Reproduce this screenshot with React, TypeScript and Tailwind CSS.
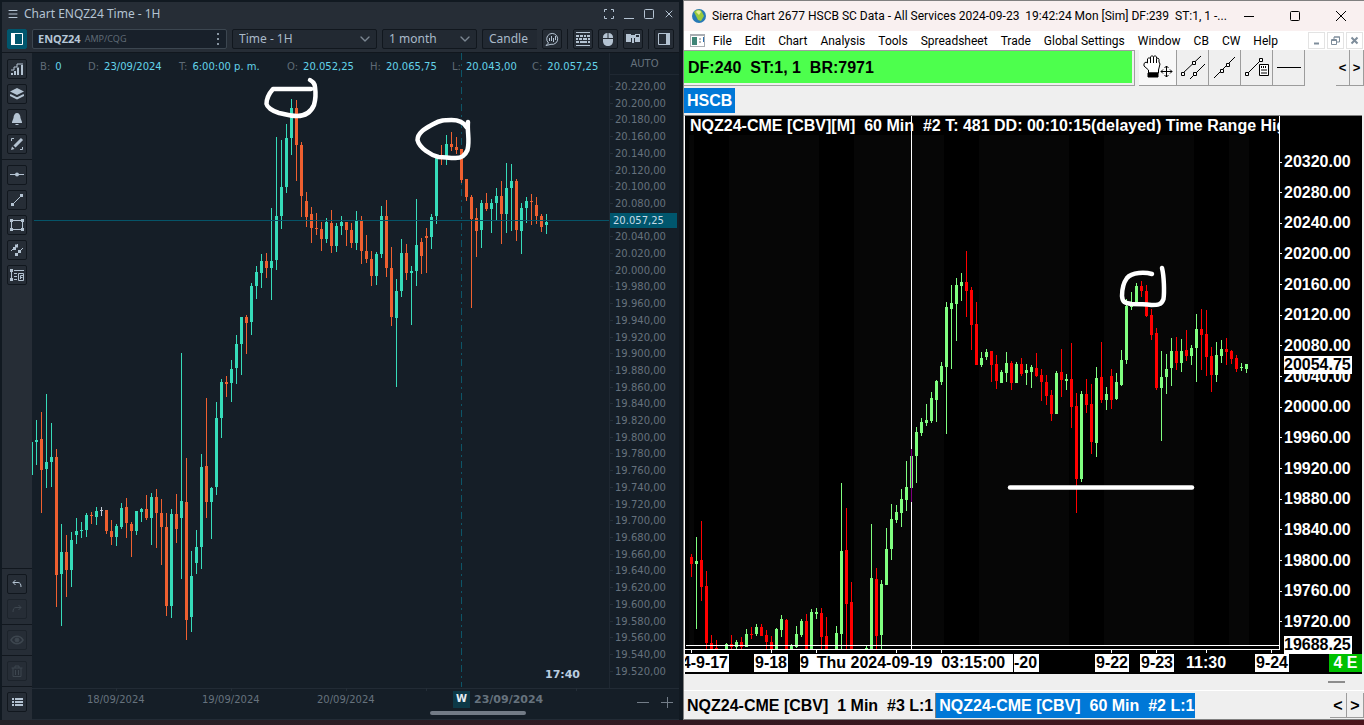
import type { ReactNode } from "react";
import { ChevronDown, Menu, X } from "lucide-react";

// [high, body top, body bottom, low, direction]; an empty row is a bar outside the view
type Bar = [number, number, number, number, string] | [];

const leftBars: Bar[] = [
  [442, 442, 475, 475, "u"], [420, 440, 442, 465, "u"], [412, 439, 470, 513, "d"], [394, 462, 469, 488, "u"],
  [423, 457, 462, 487, "u"], [449, 457, 575, 607, "d"], [524, 552, 574, 626, "u"], [535, 552, 570, 597, "d"],
  [532, 540, 570, 587, "u"], [518, 531, 535, 544, "u"], [522, 530, 531, 538, "u"], [513, 515, 530, 537, "u"],
  [512, 515, 516, 524, "d"], [507, 511, 517, 525, "u"], [507, 510, 511, 516, "n"], [510, 510, 531, 534, "d"],
  [520, 531, 537, 545, "d"], [524, 526, 537, 546, "u"], [503, 508, 527, 529, "u"], [498, 507, 523, 538, "d"],
  [522, 524, 531, 557, "d"], [511, 511, 531, 535, "u"], [508, 509, 512, 522, "u"], [495, 509, 518, 520, "d"],
  [493, 497, 518, 545, "u"], [489, 497, 513, 548, "d"], [499, 513, 527, 565, "d"], [513, 527, 606, 616, "d"],
  [509, 514, 606, 618, "u"], [494, 514, 529, 543, "d"], [353, 501, 518, 579, "u"], [458, 502, 620, 640, "d"],
  [551, 576, 617, 632, "u"], [530, 547, 563, 574, "u"], [454, 467, 547, 569, "u"], [398, 466, 502, 518, "d"],
  [487, 488, 502, 539, "u"], [402, 418, 487, 495, "u"], [379, 382, 418, 438, "u"], [376, 382, 384, 397, "d"],
  [360, 369, 383, 402, "u"], [335, 344, 368, 384, "u"], [317, 317, 344, 375, "u"], [315, 317, 323, 354, "d"],
  [283, 286, 322, 335, "u"], [266, 272, 286, 299, "u"], [254, 261, 273, 288, "u"], [253, 261, 268, 278, "d"],
  [208, 261, 268, 300, "u"], [137, 216, 260, 270, "u"], [140, 187, 216, 229, "u"], [124, 138, 187, 193, "u"],
  [99, 108, 138, 155, "u"], [100, 108, 145, 181, "d"], [142, 145, 196, 217, "d"], [192, 201, 217, 227, "d"],
  [207, 214, 228, 243, "d"], [213, 228, 229, 235, "d"], [222, 229, 239, 251, "d"], [218, 222, 239, 243, "u"],
  [210, 223, 246, 253, "d"], [223, 226, 246, 252, "u"], [216, 222, 226, 235, "u"], [222, 222, 230, 246, "d"],
  [223, 230, 243, 248, "d"], [211, 220, 243, 250, "u"], [216, 220, 251, 264, "d"], [235, 251, 259, 263, "d"],
  [251, 259, 276, 286, "d"], [252, 254, 276, 285, "u"], [206, 216, 254, 258, "u"], [200, 216, 268, 277, "d"],
  [247, 268, 317, 326, "d"], [279, 291, 318, 387, "u"], [239, 253, 291, 297, "u"], [244, 253, 273, 280, "d"],
  [266, 271, 273, 325, "u"], [199, 245, 271, 286, "u"], [238, 242, 256, 274, "d"], [228, 236, 238, 273, "d"],
  [214, 217, 237, 249, "u"], [156, 158, 216, 224, "u"], [145, 156, 158, 165, "d"], [135, 144, 158, 165, "u"],
  [132, 144, 147, 151, "d"], [137, 147, 150, 154, "d"], [149, 149, 180, 183, "d"], [179, 179, 197, 201, "d"],
  [195, 197, 219, 308, "d"], [208, 218, 231, 257, "d"], [200, 203, 230, 248, "u"], [193, 203, 209, 211, "d"],
  [199, 203, 209, 233, "u"], [188, 196, 203, 220, "u"], [181, 196, 214, 244, "d"], [163, 188, 214, 233, "u"],
  [164, 181, 188, 231, "u"], [179, 181, 230, 241, "d"], [203, 208, 231, 254, "u"], [197, 201, 208, 223, "u"],
  [194, 201, 202, 225, "d"], [197, 205, 216, 224, "d"], [214, 216, 227, 232, "d"], [214, 222, 225, 234, "u"],
];

const rightBars: Bar[] = [
  [554, 557, 564, 577, "d"], [537, 561, 564, 629, "u"], [521, 560, 587, 601, "d"], [571, 586, 643, 649, "d"],
  [635, 643, 649, 649, "d"], [640, 648, 649, 649, "d"], [], [643, 644, 649, 649, "u"],
  [635, 644, 647, 649, "d"], [640, 642, 647, 649, "u"], [637, 642, 647, 649, "d"], [629, 634, 647, 647, "u"],
  [627, 634, 635, 639, "d"], [624, 627, 634, 636, "u"], [624, 627, 636, 636, "d"], [630, 635, 642, 649, "d"],
  [636, 642, 649, 649, "d"], [628, 629, 649, 649, "u"], [615, 619, 630, 637, "u"], [619, 620, 649, 649, "d"],
  [644, 646, 649, 649, "u"], [626, 634, 647, 648, "u"], [619, 621, 635, 637, "u"], [614, 621, 649, 649, "d"],
  [609, 612, 649, 649, "u"], [608, 612, 614, 619, "u"], [608, 613, 637, 649, "d"], [617, 636, 649, 649, "d"],
  [], [626, 633, 649, 649, "u"], [483, 551, 634, 649, "u"], [508, 550, 604, 649, "d"],
  [582, 602, 649, 649, "d"], [], [], [646, 648, 649, 649, "u"],
  [524, 578, 649, 649, "u"], [568, 579, 636, 649, "d"], [580, 584, 635, 649, "u"], [528, 549, 585, 585, "u"],
  [504, 519, 549, 560, "u"], [505, 512, 520, 523, "u"], [489, 499, 513, 527, "u"], [461, 487, 500, 511, "u"],
  [449, 456, 488, 502, "u"], [427, 432, 456, 483, "u"], [418, 422, 433, 436, "u"], [404, 420, 423, 426, "u"],
  [392, 398, 421, 423, "u"], [380, 381, 400, 422, "u"], [362, 366, 382, 385, "u"], [302, 307, 367, 434, "u"],
  [285, 303, 309, 369, "u"], [278, 285, 304, 341, "u"], [273, 282, 286, 301, "u"], [251, 282, 291, 317, "d"],
  [287, 290, 325, 350, "d"], [302, 324, 365, 365, "d"], [352, 358, 365, 367, "u"], [349, 352, 357, 360, "u"],
  [351, 351, 365, 382, "d"], [355, 364, 381, 389, "d"], [370, 372, 383, 383, "u"], [352, 363, 373, 382, "u"],
  [361, 363, 383, 390, "d"], [362, 364, 383, 383, "u"], [358, 364, 374, 376, "d"], [364, 370, 373, 385, "u"],
  [365, 367, 372, 388, "u"], [353, 368, 376, 377, "d"], [369, 375, 382, 401, "d"], [375, 382, 396, 405, "d"],
  [390, 395, 414, 421, "d"], [371, 373, 414, 414, "u"], [349, 372, 380, 397, "d"], [374, 379, 381, 390, "u"],
  [343, 379, 407, 428, "d"], [393, 406, 479, 513, "d"], [391, 394, 479, 482, "u"], [379, 394, 405, 413, "d"],
  [384, 404, 442, 454, "d"], [367, 378, 443, 457, "u"], [342, 377, 400, 403, "d"], [387, 394, 400, 410, "u"],
  [369, 376, 400, 409, "d"], [373, 382, 399, 400, "u"], [350, 360, 385, 386, "u"], [299, 306, 360, 364, "u"],
  [292, 305, 307, 310, "u"], [283, 286, 304, 304, "u"], [281, 286, 291, 297, "d"], [285, 291, 316, 317, "d"],
  [309, 315, 335, 340, "d"], [328, 333, 388, 390, "d"], [351, 377, 388, 441, "u"], [354, 369, 377, 394, "u"],
  [338, 351, 368, 386, "u"], [337, 351, 363, 370, "d"], [339, 351, 363, 372, "u"], [330, 350, 356, 361, "d"],
  [345, 348, 356, 365, "u"], [314, 329, 348, 382, "u"], [309, 329, 335, 370, "d"], [310, 334, 357, 376, "d"],
  [347, 356, 375, 392, "d"], [342, 355, 375, 382, "u"], [340, 349, 356, 363, "u"], [338, 349, 352, 365, "d"],
  [350, 351, 359, 364, "d"], [355, 358, 369, 372, "d"], [363, 367, 368, 371, "u"], [364, 364, 369, 373, "u"],
];

const sessionBands = [
  [689, 5], [729, 90], [854, 90], [979, 90], [1104, 90], [1229, 20],
];

const leftPrices = Array.from({ length: 36 }, (_, i) => 20220 - i * 20);
const rightPrices = Array.from({ length: 16 }, (_, i) => 20320 - i * 40);

const formatPrice = (n: number) => `${Math.floor(n / 1000)}.${String(n % 1000).padStart(3, "0")},00`;

const quote = [
  { label: "B", value: "0", width: "w-12" },
  { label: "D", value: "23/09/2024", width: "w-[91px]" },
  { label: "T", value: "6:00:00 p. m.", width: "w-[108px]" },
  { label: "O", value: "20.052,25", width: "w-[83px]" },
  { label: "H", value: "20.065,75", width: "w-[82px]" },
  { label: "L", value: "20.043,00", width: "w-20" },
  { label: "C", value: "20.057,25", width: "w-[77px]" },
];

const menus = ["File", "Edit", "Chart", "Analysis", "Tools", "Spreadsheet", "Trade", "Global Settings", "Window", "CB", "CW", "Help"];

const Candles = ({ bars, start, colors }: { bars: Bar[]; start: number; colors: Record<string, string> }) => (
  <g shapeRendering="crispEdges">
    {bars.map((bar, i) => {
      if (bar.length === 0) return null;
      const [high, top, bottom, low, dir] = bar;
      const x = start + i * 5;
      return (
        <g key={i} fill={colors[dir]}>
          <rect x={x} y={high} width={1} height={low - high} />
          <rect x={x - 1} y={top} width={3} height={Math.max(1, bottom - top)} />
        </g>
      );
    })}
  </g>
);

const ToolButton = ({ label, children, active, dim }: { label: string; children: ReactNode; active?: boolean; dim?: boolean }) => (
  <button
    aria-label={label}
    className={`flex h-5 w-5 shrink-0 items-center justify-center rounded-[2px] border ${
      active ? "border-[#00566d] bg-[#00566d] text-white" : dim ? "border-[#1c232b] text-[#3d464f]" : "border-[#11171e] text-[#b4c3d2]"
    }`}
  >
    <svg viewBox="0 0 14 14" className="h-3.5 w-3.5" fill="none" stroke="currentColor" strokeWidth={1}>
      {children}
    </svg>
  </button>
);

const Divider = () => <div className="my-[5px] h-px w-full bg-[#11171e]" />;

const Sidebar = () => (
  <aside className="relative z-10 flex w-[30px] shrink-0 flex-col items-center bg-[#262d36] pt-1.5 pb-2">
    <div className="flex flex-col gap-[5px]">
      <ToolButton label="Indicators">
        <path d="M2 13v-2M5 13V9M8 13V5.500M12 13V3" strokeWidth={2} />
        <path d="M1 8h3V5h3V2h6" />
      </ToolButton>
      <ToolButton label="Layers">
        <path d="M7 1l7 3.500-7 3.500-7-3.500z" fill="currentColor" stroke="none" />
        <path d="M0 8l7 3.500L14 8" strokeWidth={2} />
      </ToolButton>
      <ToolButton label="Alerts">
        <path d="M7 1c-2 0-3.500 2-3.500 5L2 10v1h10v-1l-1.500-4C10.500 3 9 1 7 1zM5.500 12h3v1h-3z" fill="currentColor" stroke="none" />
      </ToolButton>
      <ToolButton label="Draw">
        <path d="M1.500 4V1.500H4M10 12.500h2.500V10" />
        <path d="M4.500 9.500L12 2" strokeWidth={3} />
        <path d="M1 13l1-3.500 2.500 2.500z" fill="currentColor" stroke="none" />
      </ToolButton>
    </div>
    <Divider />
    <div className="flex flex-col gap-[5px]">
      <ToolButton label="Horizontal line">
        <path d="M0 6.500h14" />
        <circle cx="7" cy="6.500" r="2" fill="currentColor" stroke="none" />
      </ToolButton>
      <ToolButton label="Trend line">
        <path d="M2.500 11.500l9-9" />
        <path d="M1 10h3v3H1zM10 1h3v3h-3z" fill="currentColor" stroke="none" />
      </ToolButton>
      <ToolButton label="Rectangle">
        <path d="M1.500 2.500h11v9h-11z" />
        <path d="M0 1h3v3H0zM11 1h3v3h-3zM0 10h3v3H0zM11 10h3v3h-3z" fill="currentColor" stroke="none" />
      </ToolButton>
      <ToolButton label="Channel">
        <path d="M1 8l7-7M5 13l8-8" />
        <path d="M3 4h3v3H3zM8 7h3v3H8zM5 10h3v3H5zM5 1.500h3v3H5z" fill="currentColor" stroke="none" />
      </ToolButton>
      <ToolButton label="Fibonacci">
        <path d="M1.500 2v10M4 2.500h10M4 5.500h3M4 8.500h3M4 11.500h3" />
        <path d="M0 1h3v3H0zM0 10h3v3H0z" fill="currentColor" stroke="none" />
        <path d="M8.500 5.500h5v7h-5zM10.500 11V7.500H13M10.500 9.500h2" />
      </ToolButton>
    </div>
    <div className="flex-1" />
    <Divider />
    <div className="flex flex-col gap-[5px]">
      <ToolButton label="Undo">
        <path d="M5.500 3L3 5.500 5.500 8M3 5.500h5c2 0 3 1.500 3 4.500" />
      </ToolButton>
      <ToolButton label="Redo" dim>
        <path d="M8.500 3L11 5.500 8.500 8M11 5.500H6c-2 0-3 1.500-3 4.500" />
      </ToolButton>
    </div>
    <Divider />
    <ToolButton label="Show drawings" dim>
      <path d="M1 7c3-5 9-5 12 0-3 5-9 5-12 0z" strokeWidth={1.5} />
      <circle cx="7" cy="7" r="2" fill="currentColor" />
    </ToolButton>
    <Divider />
    <ToolButton label="Delete drawings" dim>
      <path d="M1.500 4h11M3 4v8.500h8V4M5 4V2h4v2M5.500 6v5M8.500 6v5" />
    </ToolButton>
    <Divider />
    <ToolButton label="List">
      <path d="M2 4h2M5 4h8M2 7h2M5 7h8M2 10h2M5 10h8" strokeWidth={2} />
    </ToolButton>
  </aside>
);

const Dropdown = ({ label, value, className }: { label: string; value: string; className: string }) => (
  <div className={`relative h-5 shrink-0 ${className}`}>
    <select
      aria-label={label}
      className="block h-5 w-full appearance-none rounded-[2px] border border-[#11171e] bg-[#222932] pl-1.5 text-xs leading-4 text-[#a9b9c9] outline-none"
    >
      <option>{value}</option>
    </select>
    <ChevronDown className="pointer-events-none absolute top-0.5 right-1 h-4 w-4 text-[#7b8792]" strokeWidth={2} />
  </div>
);

const LeftToolbar = () => (
  <div className="flex h-7 items-center gap-[5px] border-b border-[#11171e] px-[5px]">
    <ToolButton label="Panel" active>
      <path d="M1.500 1.500h11v11h-11z" />
      <path d="M1 1h4v12H1z" fill="currentColor" stroke="none" />
    </ToolButton>
    <div className="flex h-5 min-w-0 flex-1 items-center rounded-[2px] border border-[#3c4650] bg-[#18202a] px-[5px]">
      <b className="text-[11px] leading-4 text-[#b6c6d6]">ENQZ24</b>
      <span className="ml-1 flex-1 text-[9px] leading-4 text-[#5f6a75]">AMP/CQG</span>
      <svg viewBox="0 0 2 12" className="mr-0.5 h-3 w-0.5 text-[#8794a1]" fill="currentColor">
        <path d="M0 0h2v2H0zM0 5h2v2H0zM0 10h2v2H0z" />
      </svg>
    </div>
    <Dropdown label="Interval" value="Time - 1H" className="w-[145px]" />
    <Dropdown label="Range" value="1 month" className="w-[95px]" />
    <button className="h-5 w-[55px] shrink-0 rounded-l-[2px] border border-r-0 border-[#11171e] bg-[#222932] pl-1.5 text-left text-xs leading-4 text-[#a9b9c9]">
      Candle
    </button>
    <ToolButton label="Chart analysis">
      <path d="M3.500 11A5.500 5.500 0 1 1 6 12.300L1 13.500z" />
      <path d="M4.500 6v3M6.500 4v5M8.500 6v4M10.500 4v4" />
    </ToolButton>
    <div className="h-5 w-px bg-[#11171e]" />
    <ToolButton label="Keyboard">
      <path d="M0 .5h14M0 13.500h14" />
      <path d="M0 3h3v2H0zM4 3h3v2H4zM8 3h2v2H8zM11 3h3v2h-3zM0 6h2v2H0zM3 6h3v2H3zM7 6h4v2H7zM12 6h2v2h-2zM0 9h3v2H0zM4 9h7v2H4zM12 9h2v2h-2z" fill="currentColor" stroke="none" />
    </ToolButton>
    <ToolButton label="Mouse">
      <path d="M2 6V5c0-2 2-4 4.500-4v5zM7.500 1C10 1 12 3 12 5v1H7.500zM2 7h10v2c0 3-2 5-5 5s-5-2-5-5z" fill="currentColor" stroke="none" />
    </ToolButton>
    <ToolButton label="Link charts">
      <path d="M0 2h5v1h4V2h5v8H9V6H8v5H6V6H5v4H0zM10 3h3v2h-3z" fill="currentColor" fillRule="evenodd" stroke="none" />
    </ToolButton>
    <div className="h-5 w-px bg-[#11171e]" />
    <ToolButton label="Right panel">
      <path d="M1.500 1.500h11v11h-11z" />
      <path d="M9 1h4v12H9z" fill="currentColor" stroke="none" />
    </ToolButton>
  </div>
);

const LeftWindow = () => (
  <section className="mt-0.5 mr-1 ml-0.5 flex min-w-0 flex-col bg-[#151e27] font-['Noto_Sans',sans-serif]">
    <div className="bg-[#262d36]">
      <header className="flex h-[23px] items-center gap-[5px] pr-1 pl-[5px] text-[#b4c3d2]">
        <Menu className="h-3 w-3" strokeWidth={2} />
        <h1 className="flex-1 text-xs leading-4">Chart ENQZ24 Time - 1H</h1>
        <div className="flex items-center gap-2">
          <button aria-label="Full screen">
            <svg viewBox="0 0 12 12" className="h-3 w-3" fill="none" stroke="currentColor">
              <path d="M1.500 4V1.500H4M8 1.500h2.500V4M10.500 8v2.500H8M4 10.500H1.500V8" />
            </svg>
          </button>
          <button aria-label="Minimize">
            <svg viewBox="0 0 12 12" className="h-3 w-3" stroke="currentColor">
              <path d="M1 10.500h10" />
            </svg>
          </button>
          <button aria-label="Maximize">
            <svg viewBox="0 0 12 12" className="h-3 w-3" fill="none" stroke="currentColor">
              <rect x="1.500" y="1.500" width="9" height="9" rx="1" />
            </svg>
          </button>
          <button aria-label="Close">
            <X className="h-3 w-3" strokeWidth={2} />
          </button>
        </div>
      </header>
      <LeftToolbar />
    </div>
    <div className="flex min-h-0 flex-1">
      <Sidebar />
      <div className="flex min-w-0 flex-1 flex-col">
        <div className="flex min-h-0 flex-1">
          <div className="flex min-w-0 flex-1 flex-col">
            <div className="relative z-10 flex h-[23px] items-center overflow-hidden pt-1 pl-2 font-['DejaVu_Sans',sans-serif] text-[10px] leading-4 whitespace-nowrap">
              {quote.map((q) => (
                <div key={q.label} className={`shrink-0 ${q.width}`}>
                  <span className="mr-[5px] text-[#5f6b76]">{q.label}:</span>
                  <span className="text-[#63d3e9]">{q.value}</span>
                </div>
              ))}
            </div>
            <div className="relative min-h-0 flex-1">
              <svg viewBox="32 76 577 612" preserveAspectRatio="none" className="absolute inset-0 h-full w-full overflow-visible" fill="none">
                <path d="M461.500 53v634" stroke="#0d5567" strokeDasharray="7 4 2 4" />
                <Candles bars={leftBars} start={31} colors={{ u: "#36dcba", d: "#ef6030", n: "#c3ccd6" }} />
                <path d="M34 220.500h575" stroke="#055468" />
                <path d="M116.500 688v3M231.500 688v3M346.500 688v3M426.500 688v3M576.500 688v3" stroke="#242e38" />
                <g stroke="#fff" strokeWidth={4.5} strokeLinecap="round" strokeLinejoin="round">
                  <path d="M310 80c3 2 4.500 3 5 7 1 7 .5 13-1 18-3 7-8 11-17 11-7 0-12-2-18-3-7-2-12-6-12.500-9 0-5 3-11 6.500-15h38" />
                  <path d="M468 122c-1 10 2 18-.5 28-3 7-7 8-12 8-7 0-11-1-17-1-8-2-19-9-21-17 0-8 9-12 16-16 7-4 11-4 18-4 7 0 12 2 15 7" />
                </g>
              </svg>
              <time className="absolute right-[29px] bottom-[5px] font-['DejaVu_Sans',sans-serif] text-[11px] leading-4 font-bold text-[#b9cde0]">17:40</time>
            </div>
          </div>
          <div className="flex w-[70px] shrink-0 flex-col border-l border-[#1f2832] font-['DejaVu_Sans',sans-serif] text-[10px] leading-[15px] text-[#66727d]">
            <button className="h-[22px] border-b border-[#1f2832]">AUTO</button>
            <ul className="flex flex-1 flex-col justify-between pt-[4px] pb-[9px]">
              {leftPrices.map((p) =>
                p === 20060 ? (
                  <li key={p} className="mr-[2px] bg-[#00566d] pl-[3px] text-[#c6dbe8]">20.057,25</li>
                ) : (
                  <li key={p} className="flex items-center gap-[2px]">
                    <i className="h-px w-[3px] bg-[#242e38]" />
                    {formatPrice(p)}
                  </li>
                ),
              )}
            </ul>
          </div>
        </div>
        <footer className="flex h-8 shrink-0 flex-col border-t border-b border-[#222b35] font-['DejaVu_Sans',sans-serif] text-[10px] leading-4 text-[#66727d]">
          <div className="flex h-[21px] items-center pl-[55px]">
            <span className="w-[115px]">18/09/2024</span>
            <span className="w-[115px]">19/09/2024</span>
            <span className="w-[136px]">20/09/2024</span>
            <b className="h-[17px] w-[17px] bg-[#0c3947] text-center text-[#e7eef4]">W</b>
            <b className="ml-1 text-[11px]">23/09/2024</b>
            <div className="flex-1" />
            <svg viewBox="0 0 36 12" className="mt-1 mr-1.5 h-3 w-9" stroke="#737d88" fill="none">
              <path d="M0 6.500h12M24 6.500h12M30.500 1v11" />
            </svg>
          </div>
          <div className="mt-px ml-[398px] h-[4px] w-24 shrink-0 rounded-full bg-[#737b86]" />
        </footer>
      </div>
    </div>
  </section>
);

const SquareButton = ({ label, children }: { label: string; children: ReactNode }) => (
  <button aria-label={label} className="flex h-[17px] w-[17px] items-center justify-center border border-[#e3e3e3] bg-white">
    <svg viewBox="0 0 9 9" className="h-[9px] w-[9px]" fill="none" stroke="#7e8d9b">{children}</svg>
  </button>
);

const DrawButton = ({ label, children, pressed }: { label: string; children: ReactNode; pressed?: boolean }) => (
  <button
    aria-label={label}
    className={`flex h-9 items-center justify-center border-r border-b border-[#9c9c9c] ${pressed ? "w-[38px] bg-[#f8f8f8]" : "w-8 bg-[#efefef]"}`}
  >
    {children}
  </button>
);

const RightToolbar = () => (
  <div className="flex h-[37px] shrink-0 items-start bg-[#efefef] text-base leading-[18px] font-bold">
    <div className="flex h-9 min-w-0 flex-1 items-center border-t border-r border-b border-[#a0a0a0] pr-0.5 pb-0.5">
      <div className="flex h-full flex-1 items-center bg-[#4dff4d] pt-0.5 pl-1 whitespace-pre text-black">DF:240  ST:1, 1  BR:7971</div>
    </div>
    <div className="ml-1 flex">
      <DrawButton label="Hand" pressed>
        <svg viewBox="0 0 30 26" className="h-[26px] w-[30px]" fill="#fff" stroke="#000">
          <path d="M5.500 18v-3L1 11V8.500l2-1.500 1.500 1V4L6 2.500 7.500 4V2L9 .5 10.500 2 12 .5 13.500 2v1.500L15 3l1 1.500V7l1 2-1.500 6v3z" />
          <path d="M7.500 4v4M10.500 2v6M13.500 4v4" fill="none" />
          <path d="M5 18h10v4H5z" fill="#000" />
          <path d="M23.500 11v11M18 16.500h11M21.500 13l2-2 2 2M21.500 20l2 2 2-2M20 14.500l-2 2 2 2M27 14.500l2 2-2 2" fill="none" />
        </svg>
      </DrawButton>
      <DrawButton label="Parallel lines">
        <svg viewBox="0 0 26 26" className="h-[26px] w-[26px]" fill="#fff" stroke="#000">
          <path d="M2 19L21 1M10 24L25 9" fill="none" />
          <path d="M1.500 17.500h3v3h-3zM12.500 6.500h3v3h-3zM13.500 17.500h3v3h-3z" />
        </svg>
      </DrawButton>
      <DrawButton label="Line">
        <svg viewBox="0 0 26 26" className="h-[26px] w-[26px]" fill="#fff" stroke="#000">
          <path d="M2 23L23 2" fill="none" />
          <path d="M8.500 14.500h3v3h-3zM14.500 8.500h3v3h-3z" />
        </svg>
      </DrawButton>
      <DrawButton label="Calculator">
        <svg viewBox="0 0 26 26" className="h-[26px] w-[26px]" fill="#fff" stroke="#000">
          <path d="M3 19L17 5" fill="none" />
          <path d="M1.500 17.500h3v3h-3zM15.500 3.500h3v3h-3zM15.500 9.500h9v11h-9z" />
          <path d="M17 12h6M17.500 15h5M17.500 18h5" strokeWidth={2} strokeDasharray="1 1" />
        </svg>
      </DrawButton>
      <DrawButton label="Horizontal">
        <div className="h-px w-6 bg-black" />
      </DrawButton>
    </div>
    <div className="ml-[31px] flex text-[13px]">
      <button className="h-9 w-3.5 border-r border-b border-[#9c9c9c]">&lt;</button>
      <button className="h-9 w-3.5 border-r border-b border-[#9c9c9c]">&gt;</button>
    </div>
  </div>
);

const RightChart = () => (
  <div className="mr-0.5 flex min-h-0 flex-1 flex-col border-t border-l border-t-[#808080] border-l-white bg-black text-base leading-[18px] font-bold text-white">
    <div className="flex min-h-0 flex-1">
      <div className="relative min-w-0 flex-1 border-r border-b border-white">
        <svg viewBox="685 116 594 533" preserveAspectRatio="none" className="absolute inset-0 h-full w-full overflow-visible" fill="none">
          {sessionBands.map(([x, w]) => (
            <rect key={x} x={x} y={135} width={w} height={510} fill="#060606" />
          ))}
          <path d="M911.500 116v534" stroke="#fff" />
          <Candles bars={rightBars} start={691} colors={{ u: "#80ff80", d: "#ff0000" }} />
          <path d="M911.500 449v53" stroke="#800080" />
          <path d="M686 645.500h593M691.500 650v3M771.500 650v3M816.500 650v3M896.500 650v3M941.500 650v3M1111.500 650v3M1156.500 650v3M1206.500 650v3M1271.500 650v3" stroke="#fff" />
          <g stroke="#fff" strokeWidth={4.5} strokeLinecap="round" strokeLinejoin="round">
            <path d="M1162 268c2 8 2.500 24 1.500 31-2 6-6 6-12 6-8-1-13-1-20-1-7-1-9-2-9.500-8 0-8 2-14 5-18 5-6 18-6 25-4" />
            <path d="M1010 487.500h182" />
          </g>
        </svg>
        <h2 className="relative overflow-hidden pt-px pl-[5px] whitespace-pre">NQZ24-CME [CBV][M]  60 Min  #2 T: 481 DD: 00:10:15(delayed) Time Range High</h2>
      </div>
      <div className="relative w-[82px] shrink-0">
        <ul className="flex h-full flex-col justify-between pt-[37px] pb-[19px]">
          {rightPrices.map((p) => (
            <li key={p} className="flex items-center gap-0.5">
              <i className="h-px w-[2px] bg-white" />
              {p}.00
            </li>
          ))}
        </ul>
        <span className="absolute top-[240px] left-1 bg-white pr-px text-black">20054.75</span>
        <span className="absolute -bottom-1 left-1 bg-white pr-px text-black">19688.25</span>
      </div>
    </div>
    <div className="flex h-6 shrink-0 items-center overflow-hidden pt-0.5 whitespace-pre text-black">
      <span className="flex w-11 justify-end overflow-hidden bg-white pr-px">4-9-17</span>
      <span className="ml-[25px] w-[34px] bg-white text-center">9-18</span>
      <span className="ml-3 w-[9px] bg-white">9</span>
      <span className="w-[204px] bg-white text-center">Thu 2024-09-19  03:15:00</span>
      <span className="ml-px w-[25px] bg-white">-20</span>
      <span className="ml-14 w-[34px] bg-white text-center">9-22</span>
      <span className="ml-[11px] w-[34px] bg-white text-center">9-23</span>
      <span className="ml-3 w-[42px] text-white">11:30</span>
      <span className="ml-[27px] w-[34px] bg-white text-center">9-24</span>
      <span className="ml-auto w-[33px] bg-[#00c000] text-center text-white">4 E</span>
    </div>
  </div>
);

const RightWindow = () => (
  <section className="flex min-w-0 flex-col border-t border-l border-[#808080] bg-[#efefef] font-['Liberation_Sans',sans-serif] text-black">
    <header className="flex h-[30px] shrink-0 items-center bg-[#f9f0f0] pl-2 font-[Roboto,sans-serif] text-xs leading-4">
      <svg viewBox="0 0 14 14" className="mr-1.5 h-3.5 w-3.5">
        <circle cx="7" cy="7" r="7" fill="#2779b5" />
        <path d="M2 3c2-3 7-3 8 0l2 4-3 5-3-1-2-4z" fill="#99c93c" />
        <path d="M4 3c1-2 4-2 5 0l-2 3z" fill="#e4ed91" />
      </svg>
      <h1 className="min-w-0 flex-1 overflow-hidden whitespace-pre">Sierra Chart 2677 HSCB SC Data - All Services 2024-09-23  19:42:24 Mon [Sim] DF:239  ST:1, 1 -...</h1>
      <div className="flex shrink-0 gap-[34px] pr-[17px] pl-2">
        <button aria-label="Minimize window">
          <svg viewBox="0 0 12 12" className="h-3 w-3" stroke="#000"><path d="M1 6.500h10" /></svg>
        </button>
        <button aria-label="Maximize window">
          <svg viewBox="0 0 12 12" className="h-3 w-3" fill="none" stroke="#000"><rect x="1.500" y="1.500" width="9" height="9" rx="1" /></svg>
        </button>
        <button aria-label="Close window">
          <svg viewBox="0 0 12 12" className="h-3 w-3" stroke="#000"><path d="M1 1l10 10M11 1L1 11" /></svg>
        </button>
      </div>
    </header>
    <nav className="flex h-[19px] shrink-0 items-center bg-white font-[Roboto,sans-serif] text-xs leading-4">
      <svg viewBox="0 0 15 13" className="mr-2 ml-1.5 h-[13px] w-[15px]" shapeRendering="crispEdges">
        <path d="M0 0h15v13H0z" fill="#a9adb2" />
        <path d="M1 2h13v10H1z" fill="#fff" />
        <path d="M2 3h5v8H2z" fill="#3f8577" />
        <path d="M9 4h2v2H9zM9 7h2v2H9z" fill="#b9b9b9" />
        <path d="M13 3h1v5h-1z" fill="#2d6fae" />
      </svg>
      <div className="flex flex-1 gap-[13px]">
        {menus.map((m) => (
          <button key={m} className="whitespace-nowrap">{m}</button>
        ))}
      </div>
      <div className="flex gap-0.5 pr-px">
        <SquareButton label="Minimize chart"><path d="M2 7.500h5" strokeWidth={2} /></SquareButton>
        <SquareButton label="Restore chart"><path d="M.5 3.500h5v5h-5zM3 3V1h5.500v5H6M3 1h6M.5 4.500h5" /></SquareButton>
        <SquareButton label="Close chart"><path d="M1.500 1.500l6 6M7.500 1.500l-6 6" strokeWidth={2} /></SquareButton>
      </div>
    </nav>
    <RightToolbar />
    <div className="flex h-7 shrink-0 items-start pt-px text-base leading-6 font-bold">
      <button className="h-[25px] bg-[#0078d7] px-[3px] text-white">HSCB</button>
    </div>
    <div className="flex min-h-0 flex-1 flex-col">
      <RightChart />
    </div>
    <div className="flex h-[17px] shrink-0 items-center justify-end border-b border-white pr-[19px]">
      <div className="h-0.5 w-[17px] bg-[#8c8c8c]" />
    </div>
    <footer className="flex h-[29px] shrink-0 items-center border-b border-[#808080] text-base leading-[25px] font-bold whitespace-pre">
      <button className="h-[25px] border-r border-[#808080] pr-0.5 pl-[3px]">NQZ24-CME [CBV]  1 Min  #3 L:1</button>
      <button className="h-[25px] bg-[#0078d7] pr-px pl-[3px] text-white">NQZ24-CME [CBV]  60 Min  #2 L:1</button>
      <div className="flex-1" />
      <button className="h-[25px] w-[17px] border-r border-b border-[#9c9c9c]">&lt;</button>
      <button className="h-[25px] w-[17px] border-r border-b border-[#9c9c9c]">&gt;</button>
    </footer>
  </section>
);

export default function App() {
  return (
    <main className="flex h-screen flex-col overflow-hidden bg-[#111921]">
      <div className="grid min-h-0 flex-1 grid-cols-[683fr_681fr]">
        <LeftWindow />
        <RightWindow />
      </div>
      <div className="h-[5px] shrink-0 bg-linear-to-r from-[#242127] via-[#321821] to-[#4a141b]" />
    </main>
  );
}
